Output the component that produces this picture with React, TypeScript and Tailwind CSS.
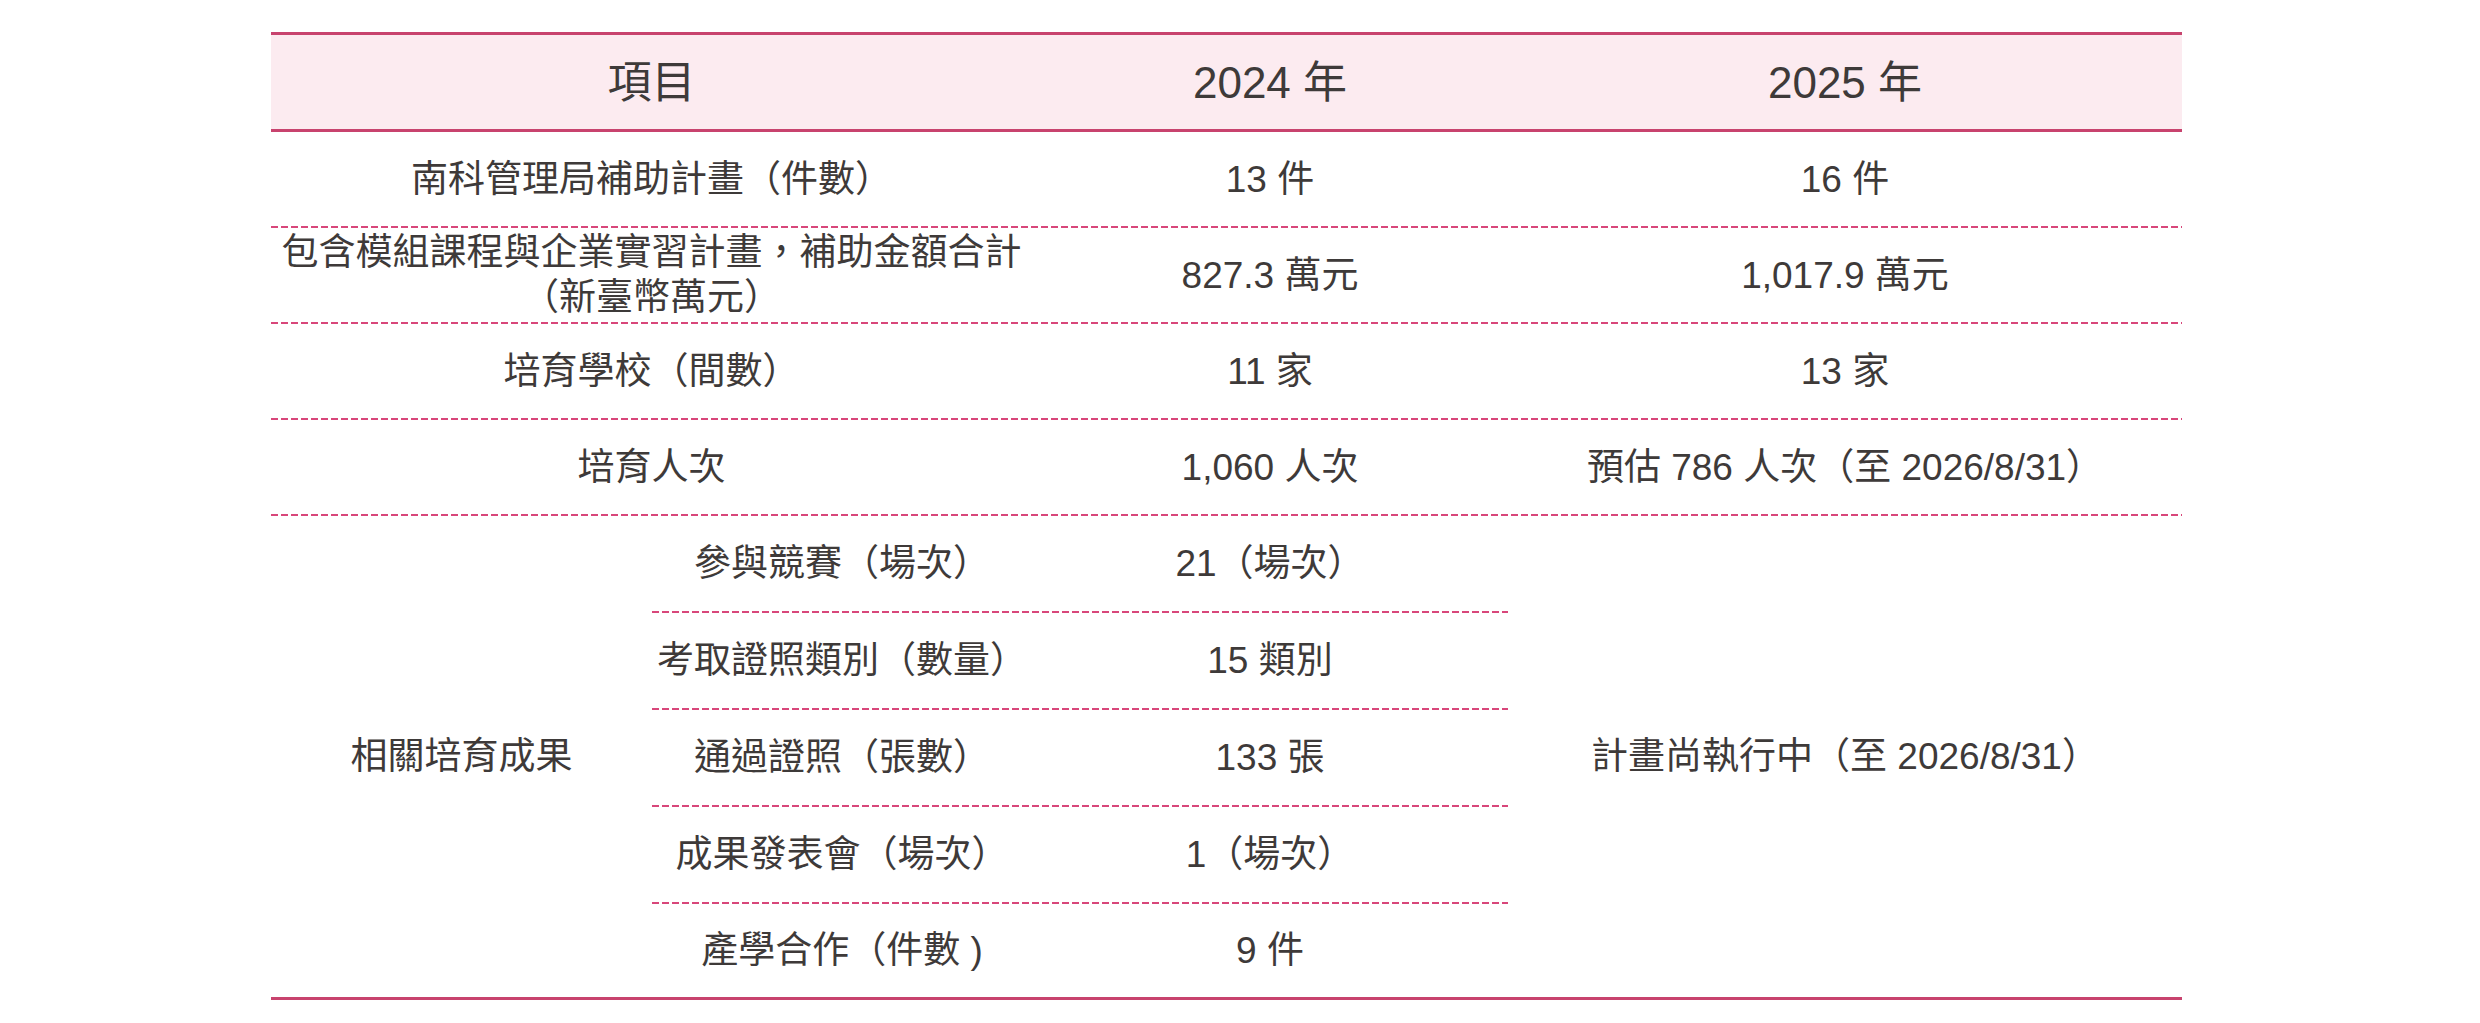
import React from "react";

const font = "font-['Liberation_Sans','Noto_Sans_CJK_TC',sans-serif]";

function Dash() {
  return (
    <div className="h-[2px] w-full bg-[linear-gradient(to_right,#d8467a_7px,transparent_7px)] bg-[length:10px_2px] bg-repeat-x" />
  );
}

function Row({ a, b, c }: { a: React.ReactNode; b: React.ReactNode; c: React.ReactNode }) {
  return (
    <>
      <div className="flex h-[94px] items-center">
        <div className="flex w-[761px] justify-center text-center whitespace-nowrap">{a}</div>
        <div className="flex w-[476px] justify-center text-center whitespace-nowrap">{b}</div>
        <div className="flex w-[674px] justify-center text-center whitespace-nowrap">{c}</div>
      </div>
      <Dash />
    </>
  );
}

const subRows: [string, string][] = [
  ["參與競賽（場次）", "21（場次）"],
  ["考取證照類別（數量）", "15 類別"],
  ["通過證照（張數）", "133 張"],
  ["成果發表會（場次）", "1（場次）"],
  ["產學合作（件數 )", "9 件"],
];

export default function App() {
  return (
    <div className={`w-[2480px] h-[1023px] bg-white pt-[32px] text-[#3e3a39] ${font}`}>
      <div className="ml-[271px] w-[1911px] text-[37px] leading-[45px]">
        <div className="flex h-[100px] items-center border-y-[3px] border-[#c8436e] bg-[#fcebf0] text-[44px]">
          <div className="flex w-[761px] justify-center">項目</div>
          <div className="flex w-[476px] justify-center">2024 年</div>
          <div className="flex w-[674px] justify-center">2025 年</div>
        </div>
        <Row a="南科管理局補助計畫（件數）" b="13 件" c="16 件" />
        <Row
          a={
            <span>
              包含模組課程與企業實習計畫，補助金額合計
              <br />
              （新臺幣萬元）
            </span>
          }
          b="827.3 萬元"
          c="1,017.9 萬元"
        />
        <Row a="培育學校（間數）" b="11 家" c="13 家" />
        <Row a="培育人次" b="1,060 人次" c="預估 786 人次（至 2026/8/31）" />
        <div className="flex">
          <div className="flex w-[381px] items-center justify-center whitespace-nowrap">相關培育成果</div>
          <div className="flex w-[856px] flex-col">
            {subRows.map(([k, v], i) => (
              <React.Fragment key={k}>
                <div className={`flex items-center ${i === subRows.length - 1 ? "h-[93px]" : "h-[95px]"}`}>
                  <div className="flex w-[380px] justify-center whitespace-nowrap">{k}</div>
                  <div className="flex w-[476px] justify-center whitespace-nowrap">{v}</div>
                </div>
                {i < subRows.length - 1 && <Dash />}
              </React.Fragment>
            ))}
          </div>
          <div className="flex w-[674px] items-center justify-center whitespace-nowrap">計畫尚執行中（至 2026/8/31）</div>
        </div>
        <div className="h-[3px] w-full bg-[#c8436e]" />
      </div>
    </div>
  );
}
